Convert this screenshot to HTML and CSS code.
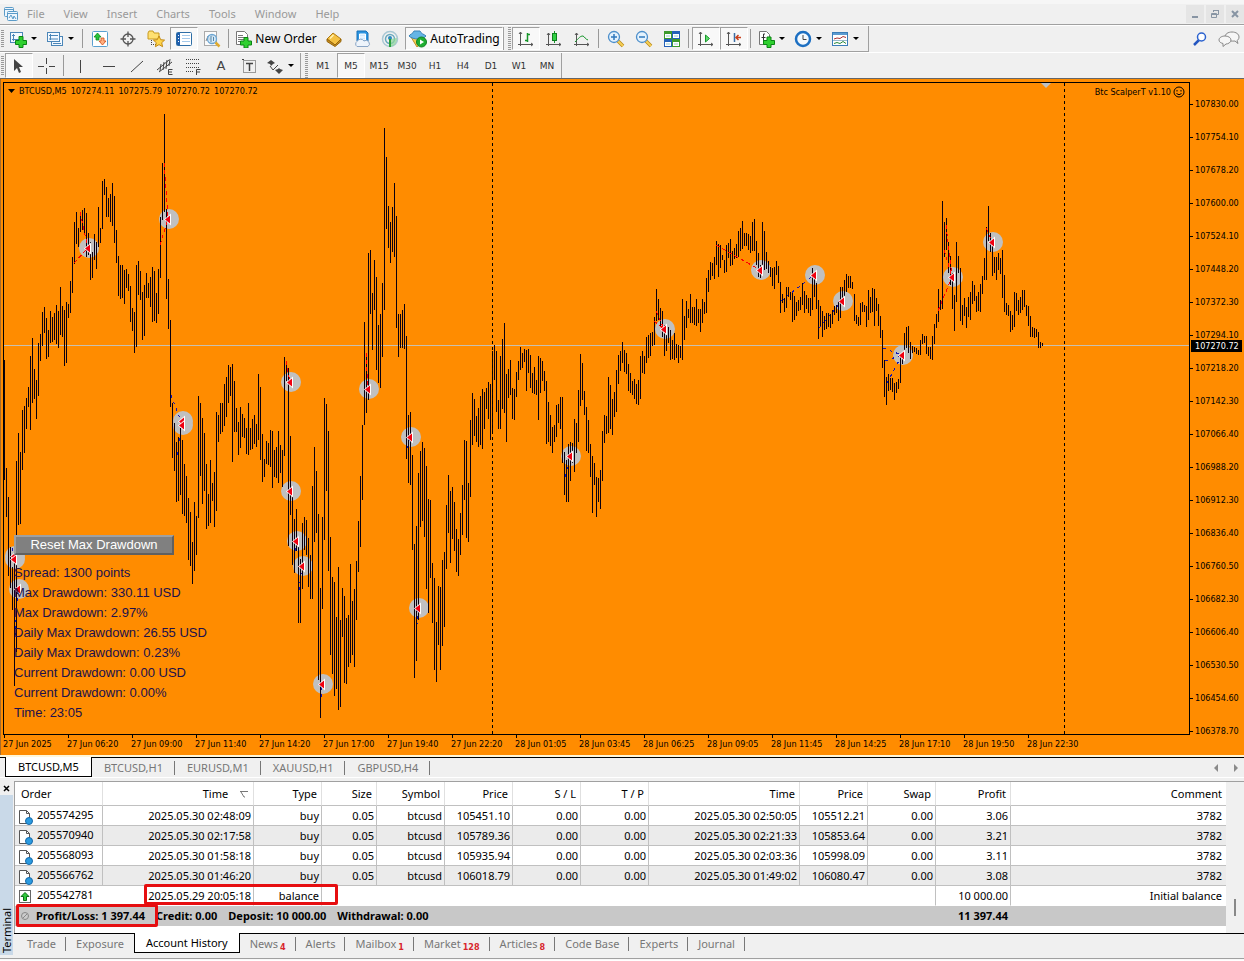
FILE: index.html
```html
<!DOCTYPE html>
<html lang="en">
<head>
<meta charset="utf-8">
<title>BTCUSD,M5</title>
<link rel="stylesheet" href="styles.css">
</head>
<body>
<div class="app">
  <header class="menubar">
    <svg class="app-icon" width="16" height="16" viewBox="0 0 16 16" fill="#eef6fd" stroke="#5b9bc8"><rect x="1.500" y="1.500" width="9" height="9" rx="1"/><path d="M1.500 3.500h9" /><rect x="4.500" y="5.500" width="10" height="9" rx="1"/><path d="M4.500 7.500h10M6 12l2-3 2 4 1-3 2 3" fill="none"/></svg>
    <nav class="menu">
      <button>File</button><button>View</button><button>Insert</button><button>Charts</button><button>Tools</button><button>Window</button><button>Help</button>
    </nav>
    <div class="win-controls">
      <button aria-label="Minimize"><svg width="10" height="10"><path d="M2 8h6" stroke="#8794a3" stroke-width="2"/></svg></button>
      <button aria-label="Restore"><svg width="10" height="10" fill="none" stroke="#8794a3"><path d="M3.500 3V1.500h5v4H7M3 1.500h6"/><path d="M1.500 4.500h5v4h-5zM1 5.500h6"/></svg></button>
      <button aria-label="Close"><svg width="10" height="10"><path d="M2 2l6 6M8 2l-6 6" stroke="#8794a3" stroke-width="2"/></svg></button>
    </div>
  </header>

  <div class="toolbar-row">
    <div class="toolbar">
      <span class="grip"></span>
      <button class="drop" aria-label="New chart"><svg width="18" height="18"><rect x="1.500" y="2.500" width="12" height="10" fill="#f3f9ff" stroke="#4b86b8"/><path d="M4.500 4v7M3 9.500h8M3 5.500h3" stroke="#4b86b8"/><path d="M10 6.500h4v4h3.500v4H14v3h-4v-3H6.500v-4H10z" fill="#2fd02f" stroke="#0a8414"/></svg></button>
      <button class="drop" aria-label="Profiles"><svg width="18" height="18" fill="#f3f9ff" stroke="#4b86b8"><rect x="5.500" y="6.500" width="11" height="9"/><rect x="1.500" y="2.500" width="12" height="9"/><path d="M3 5.500h9M4.500 4v6M3 9h9M7 13.500h8" /></svg></button>
      <span class="sep"></span>
      <button class="tool" aria-label="Market Watch"><svg width="18" height="18"><rect x="1.500" y="1.500" width="15" height="15" rx="1" fill="#fff" stroke="#5aa0d0"/><path d="M6.500 3l3.500 4H8v3H5V7H3z" fill="#27c43b" stroke="#0b8a1d" stroke-width=".8"/><path d="M11.500 15L8 11h2V8h3v3h2z" fill="#ffb080" stroke="#d24b12" stroke-width=".8"/></svg></button>
      <button class="tool" aria-label="Data Window"><svg width="18" height="18" fill="none" stroke="#555" stroke-width="1.300"><circle cx="9" cy="9" r="5"/><path d="M9 1.500v5.500M9 11v5.500M1.500 9H7M11 9h5.500"/></svg></button>
      <button class="tool" aria-label="Navigator"><svg width="18" height="18"><path d="M1 3l1-2h4l1 2h5v6H1z" fill="#ffe071" stroke="#c89a20"/><path d="M4.500 10v6M6 14.500h3" stroke="#444" stroke-dasharray="1 1"/><path d="M12 6l1.700 3.700 3.900.4-2.900 2.600.9 4-3.600-2.100-3.600 2.100.9-4-2.900-2.600 3.900-.4z" fill="#ffd54a" stroke="#c48a12"/></svg></button>
      <button class="tool pressed" aria-label="Terminal"><svg width="18" height="18"><rect x="1.500" y="2.500" width="15" height="13" rx="1" fill="#fff" stroke="#2e6ea6"/><path d="M2 3h3v12H2z" fill="#1f5fae"/><path d="M7 5.500h8M7 8.500h8M7 11.500h8" stroke="#a4c9ea"/><path d="M3 5.500h1M3 8.500h1M3 11.500h1" stroke="#fff"/></svg></button>
      <button class="tool" aria-label="Strategy Tester"><svg width="18" height="18"><rect x="1.500" y="1.500" width="12" height="14" fill="#fbfbfb" stroke="#aaa"/><path d="M3 11l2-5 2 4 2-6 2 5" fill="none" stroke="#888"/><circle cx="9" cy="9" r="4.500" fill="#cfe6f8" fill-opacity=".8" stroke="#6ba5d2" stroke-width="1.300"/><path d="M8 6v6M10.500 7v4" stroke="#5588aa"/><path d="M12.500 12.500l4 4" stroke="#e0aa2c" stroke-width="2.500"/></svg></button>
      <span class="sep"></span>
      <button class="wide order"><svg width="18" height="18"><path d="M1.500 1.500h8l3 3v10h-11z" fill="#fff" stroke="#777"/><path d="M3 5.500h5M3 7.500h7M3 9.500h6M3 11.500h4" stroke="#777"/><path d="M9 7.500h4v3.500h3.500v4H13v3H9v-3H5.500v-4H9z" fill="#2fd02f" stroke="#0a8414"/></svg>New Order</button>
      <button class="tool" aria-label="MetaEditor"><svg width="18" height="18"><path d="M2 9l6-6 8 6-6 6z" fill="#f4c143" stroke="#b07a12"/><path d="M2 9v2.500l8 5 6-5V9l-6 6z" fill="#c98f1d" stroke="#94640c"/><path d="M5 8.500l3.500-3.500" stroke="#fff3b8" stroke-width="1.500"/></svg></button>
      <button class="tool" aria-label="Virtual hosting"><svg width="18" height="18"><path d="M4 1h9l2 2v8H4z" fill="#2d94e0" stroke="#1670b8"/><path d="M6.500 4h6v6h-6zM7 7h5" fill="#cfe8ff" stroke="#fff"/><path d="M4 16.500a3 3 0 010-5 4 4 0 017-.5 3 3 0 014 5.500z" fill="#eef4fb" stroke="#8ba6c6"/></svg></button>
      <button class="tool" aria-label="Signals"><svg width="18" height="18" fill="none"><circle cx="9" cy="9" r="7.500" stroke="#a9c8d4" stroke-width="1.500"/><circle cx="9" cy="9" r="4.500" stroke="#6aa9bd" stroke-width="1.500"/><path d="M9 9v8a8 8 0 007-9" fill="#8fd69a" fill-opacity=".7"/><circle cx="9" cy="8" r="2" fill="#2c8ac0"/><path d="M9 9v8" stroke="#2ba03b" stroke-width="2"/></svg></button>
      <button class="wide auto pressed"><svg width="20" height="20"><path d="M3 8l6 10 8-8z" fill="#f5cf52" stroke="#c2922a"/><path d="M1 7c1-2 4-2 5-5h6c1 3 4 3 6 5-3 4-13 4-17 0z" fill="#65b5e6" stroke="#3a83b8"/><circle cx="13.500" cy="13" r="5" fill="#1fae32" stroke="#128222"/><path d="M12 10.500v5l4-2.500z" fill="#fff"/></svg>AutoTrading</button>
      <span class="grip split"></span>
      <button class="tool pressed" aria-label="Bar chart"><svg width="18" height="18"><path d="M3.500 2v14M1 14.500h15M2 4l1.500-2L5 4M14 13l2 1.500-2 1.500" fill="none" stroke="#555"/><path d="M10.500 3v9M8 10.500h2M11 4.500h2" stroke="#16962a" stroke-width="1.500"/></svg></button>
      <button class="tool" aria-label="Candlesticks"><svg width="18" height="18"><path d="M3.500 3v13M1 14.500h15M2 5l1.500-2L5 5M14 13l2 1.500-2 1.500" fill="none" stroke="#555"/><path d="M9.500 1v12" stroke="#16962a"/><rect x="7.500" y="3.500" width="4" height="7" fill="#2fd043" stroke="#0e7f1e"/></svg></button>
      <button class="tool" aria-label="Line chart"><svg width="18" height="18" fill="none"><path d="M3.500 3v13M1 14.500h15M2 5l1.500-2L5 5M14 13l2 1.500-2 1.500" stroke="#555"/><path d="M2 12c4-4 5-6 8-6 2 1 2 3 5 4" stroke="#16962a"/></svg></button>
      <span class="sep"></span>
      <button class="tool" aria-label="Zoom in"><svg width="18" height="18"><path d="M11 11l5 5" stroke="#b98a1b" stroke-width="3.500"/><path d="M11 11l5 5" stroke="#f6cf55" stroke-width="2"/><circle cx="7" cy="7" r="5.500" fill="#e4f2fd" stroke="#4d8fcb" stroke-width="1.300"/><path d="M4 7h6M7 4v6" stroke="#2f78bd" stroke-width="1.500"/></svg></button>
      <button class="tool" aria-label="Zoom out"><svg width="18" height="18"><path d="M11 11l5 5" stroke="#b98a1b" stroke-width="3.500"/><path d="M11 11l5 5" stroke="#f6cf55" stroke-width="2"/><circle cx="7" cy="7" r="5.500" fill="#e4f2fd" stroke="#4d8fcb" stroke-width="1.300"/><path d="M4 7h6" stroke="#2f78bd" stroke-width="1.500"/></svg></button>
      <button class="tool" aria-label="Tile windows"><svg width="18" height="18"><path d="M1 1h8v8H1zM9 9h8v8H9z" fill="#3d9a2c"/><path d="M9 1h8v8H9zM1 9h8v8H1z" fill="#2461b8"/><path d="M2 4h6v4H2zM10 4h6v4h-6zM2 12h6v4H2zM10 12h6v4h-6z" fill="#fff"/><path d="M3 6h4M11 6h4M3 14h4M11 14h4" stroke="#9cc"/></svg></button>
      <span class="sep"></span>
      <button class="tool pressed" aria-label="Auto scroll"><svg width="18" height="18"><path d="M3.500 2v14M1 14.500h15M2 4l1.500-2L5 4M14 13l2 1.500-2 1.500" fill="none" stroke="#555"/><path d="M8.500 5v7l4-3.500z" fill="#5fdc6c" stroke="#16962a"/></svg></button>
      <button class="tool pressed" aria-label="Chart shift"><svg width="18" height="18"><path d="M3.500 2v14M1 14.500h15M2 4l1.500-2L5 4M14 13l2 1.500-2 1.500" fill="none" stroke="#555"/><path d="M9.500 3v9" stroke="#3a6ea5" stroke-width="1.500"/><path d="M11 7.500h5M13.500 5L11 7.500l2.500 2.500" fill="none" stroke="#c8401c" stroke-width="1.500"/></svg></button>
      <span class="sep"></span>
      <button class="drop" aria-label="Indicators"><svg width="18" height="18"><path d="M2.500 1.500h7l3 3v10h-10z" fill="#fff" stroke="#777"/><path d="M8 4H6.500v9M4.500 7.500h4" fill="none" stroke="#333"/><path d="M10 7h4v3.500h3.500v4H14v3h-4v-3H6.500v-4H10z" fill="#2fd02f" stroke="#0a8414"/></svg></button>
      <button class="drop" aria-label="Periods"><svg width="18" height="18"><circle cx="9" cy="9" r="7" fill="#f4f9fd" stroke="#1c6fc2" stroke-width="2.500"/><path d="M9 5v4.500h3.500" fill="none" stroke="#444"/></svg></button>
      <button class="drop" aria-label="Templates"><svg width="18" height="18"><rect x="1.500" y="2.500" width="15" height="13" fill="#fff" stroke="#3b7db8"/><path d="M2 4h14" stroke="#5b9bd0" stroke-width="2"/><path d="M3 9l3-1 3 .500 3-2 3 1" fill="none" stroke="#a33"/><path d="M2 10.500h14" stroke="#9bc"/><path d="M3 13.500l3-1 3 1 3-2 3 2" fill="none" stroke="#2a8a3a"/></svg></button>
      <span class="tb-end"></span>
    </div>
    <div class="right-tools">
      <button aria-label="Search"><svg width="16" height="16"><path d="M2 14l5-5" stroke="#2456c0" stroke-width="2.500"/><circle cx="9.500" cy="6" r="4" fill="#fff" stroke="#2b62cf" stroke-width="1.500"/></svg></button>
      <button aria-label="Chat"><svg width="22" height="18" fill="#f6f6f6" stroke="#888"><path d="M14 2c4 0 7 2 7 5 0 2-1 3-2 3.500l1 3-3-2.500c-6 .5-10-1-10-4s3-5 7-5z"/><path d="M7 6c3 0 6 1.500 6 4s-3 4-5 4l-3 2.500v-3C3 13 1 12 1 10c0-2.500 3-4 6-4z"/></svg></button>
    </div>
  </div>

  <div class="toolbar-row lower">
    <div class="toolbar second">
      <span class="grip"></span>
      <button class="tool pressed" aria-label="Cursor"><svg width="18" height="18"><path d="M4 2v12l3-3 2 5 2-1-2-5h4z" fill="#444"/></svg></button>
      <button class="tool" aria-label="Crosshair"><svg width="18" height="18" stroke="#444"><path d="M8.500 1v6M8.500 11v6M0 9.500h6M11 9.500h6"/></svg></button>
      <span class="sep"></span>
      <button class="tool" aria-label="Vertical line"><svg width="18" height="18" stroke="#444"><path d="M8.500 3v13"/></svg></button>
      <button class="tool" aria-label="Horizontal line"><svg width="18" height="18" stroke="#444"><path d="M3 9.500h12"/></svg></button>
      <button class="tool" aria-label="Trendline"><svg width="18" height="18" stroke="#444"><path d="M3 15L15 4"/></svg></button>
      <button class="tool" aria-label="Equidistant channel"><svg width="18" height="18" stroke="#444" fill="none"><path d="M1 13L13 3M3 15L16 5M5 7l-1 7M8 5L7 13M11 3l-1 9M14 2l-1 7"/><path d="M16.500 12.500h-4v5h4M12.500 15h3.500"/></svg></button>
      <button class="tool" aria-label="Fibonacci"><svg width="18" height="18" stroke="#444" fill="none"><path d="M2 2.500h14M2 6.500h14M2 10.500h14M2 14.500h8" stroke-dasharray="1 1"/><path d="M16.500 12.500h-4v5.500M12.500 15h3.500"/></svg></button>
      <button class="tool letter">A</button>
      <button class="tool" aria-label="Text label"><svg width="18" height="18" stroke="#444" fill="none"><path d="M3.500 3.500h12v12h-12z" stroke-dasharray="1 1"/><path d="M6 6.500h7M9.500 6v8" stroke-width="1.500"/><path d="M2 2.500h2"/></svg></button>
      <button class="drop" aria-label="Arrows"><svg width="18" height="18"><path d="M1 6l4-3 4 3-2 1-2 2-1-2z" fill="#444"/><path d="M9 13l4 4 4-4-3-1-1-1-1 1z" fill="#444"/><path d="M4 9l3 4 5-5" fill="none" stroke="#444"/></svg></button>
      <span class="grip split"></span>
      <button class="tool tf">M1</button><button class="tool tf pressed">M5</button><button class="tool tf">M15</button><button class="tool tf">M30</button><button class="tool tf">H1</button><button class="tool tf">H4</button><button class="tool tf">D1</button><button class="tool tf">W1</button><button class="tool tf">MN</button>
      <span class="tb-end"></span>
    </div>
  </div>

  <main class="chart">
    <section class="plot">
      <svg class="plot-svg" id="plot"></svg>
      <div class="chart-title"><svg width="7" height="4"><path d="M0 0h7L3.500 4z"/></svg><span>BTCUSD,M5</span><span>107274.11</span><span>107275.79</span><span>107270.72</span><span>107270.72</span></div>
      <div class="expert">Btc ScalperT v1.10<svg width="12" height="12" fill="none" stroke="#000"><circle cx="6" cy="6" r="5"/><path d="M4 4v1.500M8 4v1.500M3.500 7.500q2.500 2.500 5 0"/></svg></div>
      <div class="stats">
        <button class="reset">Reset Max Drawdown</button>
        <p>Spread: 1300 points</p><p>Max Drawdown: 330.11 USD</p><p>Max Drawdown: 2.97%</p><p>Daily Max Drawdown: 26.55 USD</p><p>Daily Max Drawdown: 0.23%</p><p>Current Drawdown: 0.00 USD</p><p>Current Drawdown: 0.00%</p><p>Time: 23:05</p>
      </div>
    </section>
    <aside class="prices">
      <span>107830.00</span><span>107754.10</span><span>107678.20</span><span>107600.00</span><span>107524.10</span><span>107448.20</span><span>107372.30</span><span>107294.10</span><span>107218.20</span><span>107142.30</span><span>107066.40</span><span>106988.20</span><span>106912.30</span><span>106836.40</span><span>106760.50</span><span>106682.30</span><span>106606.40</span><span>106530.50</span><span>106454.60</span><span>106378.70</span>
      <b class="bid">107270.72</b>
    </aside>
    <div class="times">
      <span>27 Jun 2025</span><span>27 Jun 06:20</span><span>27 Jun 09:00</span><span>27 Jun 11:40</span><span>27 Jun 14:20</span><span>27 Jun 17:00</span><span>27 Jun 19:40</span><span>27 Jun 22:20</span><span>28 Jun 01:05</span><span>28 Jun 03:45</span><span>28 Jun 06:25</span><span>28 Jun 09:05</span><span>28 Jun 11:45</span><span>28 Jun 14:25</span><span>28 Jun 17:10</span><span>28 Jun 19:50</span><span>28 Jun 22:30</span>
    </div>
  </main>

  <nav class="tabs chart-tabs">
    <button class="active">BTCUSD,M5</button><button>BTCUSD,H1</button><button>EURUSD,M1</button><button>XAUUSD,H1</button><button>GBPUSD,H4</button>
    <span class="scroll-arrows"><button aria-label="Scroll left"><svg width="4" height="8"><path d="M4 0v8L0 4z" fill="#8a8a8a"/></svg></button><button aria-label="Scroll right"><svg width="4" height="8"><path d="M0 0v8l4-4z" fill="#8a8a8a"/></svg></button></span>
  </nav>

  <section class="terminal">
    <div class="side"><button aria-label="Close terminal"><svg width="7" height="7"><path d="M1 1l5 5M6 1L1 6" stroke="#000" stroke-width="1.500"/></svg></button><span>Terminal</span></div>
    <div class="panel">
      <div class="table-area">
        <table>
          <colgroup><col class="c-order"><col class="c-time"><col class="c-mid"><col class="c-size"><col class="c-mid"><col class="c-mid"><col class="c-mid"><col class="c-mid"><col class="c-time"><col class="c-mid"><col class="c-mid"><col class="c-profit"><col></colgroup>
          <thead><tr><th>Order</th><th>Time <svg class="sort" width="8" height="7" fill="none" stroke="#777"><path d="M0 .500h8M1 1l3 5h1"/></svg></th><th>Type</th><th>Size</th><th>Symbol</th><th>Price</th><th>S / L</th><th>T / P</th><th>Time</th><th>Price</th><th>Swap</th><th>Profit</th><th>Comment</th></tr></thead>
          <tbody id="orders"></tbody>
          <tfoot><tr><td colspan="11"><div class="totals"><svg width="10" height="10" fill="none" stroke="#888"><circle cx="5" cy="5" r="3.500" fill="#ccc"/><path d="M3 7l4-4"/></svg><span>Profit/Loss: 1 397.44</span><span>Credit: 0.00</span><span>Deposit: 10 000.00</span><span>Withdrawal: 0.00</span></div></td><td>11 397.44</td><td></td></tr></tfoot>
        </table>
        <i class="mark mark-balance"></i><i class="mark mark-profit"></i>
        <div class="scrollbar"><i></i></div>
      </div>
      <nav class="tabs term-tabs">
        <button>Trade</button><button class="last">Exposure</button><button class="active">Account History</button><button>News<sub>4</sub></button><button>Alerts</button><button>Mailbox<sub>1</sub></button><button>Market<sub>128</sub></button><button>Articles<sub>8</sub></button><button>Code Base</button><button>Experts</button><button>Journal</button>
      </nav>
    </div>
  </section>
  <footer class="status"></footer>
</div>
<script src="script.js"></script>
</body>
</html>
```

FILE: styles.css
```css
* { box-sizing: border-box; }
body { margin: 0; font: 11px/16px "Noto Sans", "Open Sans", sans-serif; color: #000; background: #f0f0f0; }
button { font: inherit; color: inherit; background: none; border: 0; padding: 0; margin: 0; display: inline-flex; align-items: center; justify-content: center; }
p { margin: 0; }
.app { min-height: 100vh; display: flex; flex-direction: column; overflow: hidden; }

.menubar { display: flex; align-items: center; height: 25px; padding: 4px 0 0 3px; border-bottom: 1px solid #a0a0a0; background: linear-gradient(#f6f6f6 4px, #f0f0f0 4px); }
.menu { display: flex; gap: 19px; padding-left: 8px; flex: 1; color: #999; }
.win-controls { display: flex; gap: 2px; }
.win-controls button { width: 18px; height: 18px; background: #e5e5e5; }

.toolbar-row { display: flex; justify-content: space-between; height: 27px; border-top: 1px solid #fff; }
.toolbar-row.lower { height: 26px; }
.toolbar { display: flex; align-items: stretch; padding: 1px 0; border-bottom: 1px solid #a0a0a0; flex: none; }
.toolbar.second { border-bottom: 0; padding: 0; }
.grip { width: 6px; margin: 3px 0; background: repeating-linear-gradient(#999 0 1px, transparent 1px 2px) 1px 0 / 3px 100% no-repeat; }
.second .grip { width: 5px; }
.grip.split { width: 9px; margin: 0; border-left: 1px solid #a0a0a0; background-position: 4px 0; }
.second .grip.split { width: 9px; }
.sep { width: 1px; margin: 2px 3px 2px 2px; background: #999; }
.tb-end { width: 1px; margin: -1px 0 -1px 3px; background: #a0a0a0; }
.second .tb-end { margin: 0; }
.tool { width: 28px; }
.drop { width: 37px; justify-content: flex-start; padding-left: 3px; gap: 4px; }
.drop::after { content: ""; border: 3px solid transparent; border-top-color: #000; border-bottom: 0; }
.pressed { background: #f8f8f8; border: 1px solid; border-color: #a0a0a0 #fff #fff #a0a0a0; background-clip: padding-box; }
.wide { gap: 2px; font-size: 12px; }
.order { width: 88px; }
.auto { width: 98px; margin-left: 1px; }
.tf { font: 9px/12px "DejaVu Sans", sans-serif; color: #333; }
.letter { font: 13px/16px "DejaVu Sans", sans-serif; color: #444; }
.right-tools { display: flex; align-items: center; gap: 10px; padding-right: 4px; }

.chart { flex: 1; display: grid; grid-template: minmax(653px, 1fr) 20px / minmax(0, 1fr) 54px; background: #ff8c00; border-top: 1px solid #666; border-left: 1px solid #a56a2c; padding: 3px 0 0 2px; font: 9px/12px "DejaVu Sans Condensed", "DejaVu Sans", sans-serif; }
.plot { position: relative; border: 1px solid #000; }
.plot-svg { position: absolute; inset: 0; width: 100%; height: 100%; }
.chart-title { position: absolute; left: 4px; top: 2px; display: flex; align-items: center; gap: 4px; }
.expert { position: absolute; right: 4px; top: 3px; display: flex; align-items: center; gap: 2px; }
.stats { position: absolute; left: 10px; bottom: 11px; font: 13px/20px "Liberation Sans", Arial, sans-serif; color: #20104c; }
.reset { width: 160px; height: 20px; margin-bottom: 8px; background: #808080; color: #fff; border: 2px solid; border-color: #a0a0a0 #606060 #606060 #a0a0a0; }
.prices { grid-row: 1 / 3; grid-column: 2; position: relative; padding-top: 6px; display: flex; flex-direction: column; height: 673px; overflow: hidden; }
.prices span { flex: none; height: 33px; line-height: 33px; display: flex; align-items: center; gap: 2px; }
.prices span::before { content: ""; width: 3px; height: 1px; background: #000; }
.bid { position: absolute; left: 1px; right: 2px; top: 258px; height: 12px; padding-left: 4px; background: #000; color: #fff; font-weight: 400; }
.times { display: flex; overflow: hidden; }
.times span { flex: 0 0 64px; white-space: nowrap; position: relative; padding-top: 3px; }
.times span::before { content: ""; position: absolute; left: 1px; top: 0; width: 1px; height: 3px; background: #000; }

.tabs { display: flex; border-top: 1px solid #000; color: #777; }
.tabs button { position: relative; height: 19px; padding: 0 12px; }
.tabs button::after { content: ""; position: absolute; right: 0; top: 3px; bottom: 2px; width: 1px; background: #777; }
.tabs .active { background: #fff; color: #000; border: 1px solid #000; border-top: 0; margin-top: -1px; height: 20px; }
.tabs .active::after, .tabs .last::after, .scroll-arrows button::after { display: none; }
.chart-tabs { margin-top: 2px; padding-left: 5px; height: 21px; border-bottom: 1px solid #fff; box-shadow: 0 -2px #fff6d8; }
.scroll-arrows { margin-left: auto; display: flex; gap: 16px; padding-right: 6px; }
.tabs .scroll-arrows button { padding: 0; }

.terminal { display: flex; margin-top: 3px; }
.side { width: 14px; flex: none; display: flex; flex-direction: column; }
.side button { height: 14px; width: 12px; }
.side span { flex: 1; writing-mode: vertical-rl; transform: rotate(180deg); width: 13px; line-height: 13px; padding-top: 2px; background: #c9d9e8; }
.panel { flex: 1; min-width: 0; }
.table-area { position: relative; display: flex; height: 152px; background: #fff; border-top: 1px solid #a0a0a0; border-left: 1px solid #a0a0a0; }
table { flex: 1; width: 0; height: 144px; table-layout: fixed; border-collapse: separate; border-spacing: 0; white-space: nowrap; }
.c-order { width: 88px; } .c-time { width: 151px; } .c-mid { width: 68px; } .c-size { width: 55px; } .c-profit { width: 75px; }
th { height: 24px; padding: 0 4px; font-weight: 400; text-align: right; border-right: 1px solid #e0e0e0; border-bottom: 1px solid #c0c0c0; }
th:first-child { text-align: left; padding-left: 6px; }
.sort { margin: 0 1px 0 9px; }
td { height: 20px; padding: 0 2px 0 0; text-align: right; border-right: 1px solid #c0c0c0; border-bottom: 1px solid #c0c0c0; line-height: 18px; }
td:first-child { text-align: left; padding-left: 3px; }
td svg { vertical-align: middle; margin-right: 4px; }
tbody tr:nth-child(even) td { background: #ebebeb; }
tbody tr:last-child td { border-bottom-color: #fff; }
tbody tr:last-child td:first-child { border-right-color: #fff; }
tfoot td, tfoot td:first-child { background: #c8c8c8; border-color: #c8c8c8; font-weight: 700; }
tfoot td:first-child { padding-left: 5px; }
.totals { display: flex; align-items: center; gap: 11px; }
.totals svg { margin-right: -5px; }
td:last-child, th:last-child { border-right: 0; padding-right: 4px; }
.mark { position: absolute; border: 3px solid #e60e10; border-radius: 2px; }
.mark-balance { left: 129px; top: 102px; width: 194px; height: 21px; }
.mark-profit { left: 1px; top: 122px; width: 142px; height: 23px; }
.scrollbar { width: 18px; background: #f0f0f0; display: flex; justify-content: center; align-items: flex-end; padding-bottom: 17px; }
.scrollbar i { width: 2px; height: 17px; background: #888; }
.term-tabs { height: 22px; }
.term-tabs button { padding: 0 10px; }
.term-tabs button:first-child { padding-left: 13px; }
.term-tabs .active { padding: 0 11px; }
sub { font: 700 9px/9px "DejaVu Sans Condensed", sans-serif; color: #d8262c; align-self: flex-end; padding: 0 0 1px 2px; }
.status { height: 6px; border-bottom: 1px solid #fff; background: linear-gradient(#f0f0f0 3px, #a0a0a0 3px 4px, #f8f8f8 4px); }
```

FILE: script.js
```js
const NS = "http://www.w3.org/2000/svg";
const plot = document.getElementById("plot");
// Bars: first x of each run, then high/low pairs at a step of two pixels.
const runs = [
[4, "360-480 468-517 497-576 547-588 567-610 543-686 461-652 433-525 452-524 410-470"],
[24, "406-453 398-429 387-407 356-430 338-403 369-399 380-419 343-396 334-361 312-346"],
[44, "307-333 318-359 330-357 311-343 317-342 313-340 305-344 311-348 287-335 306-337"],
[64, "310-366 302-363 304-318 281-313 257-293 222-264 212-244 228-247 212-232 210-230"],
[84, "208-235 213-257 233-255 242-280 252-278 234-260 242-269 207-247 228-243 181-229"],
[104, "179-195 187-217 198-217 194-222 183-226 196-243 230-263 256-296 265-299 265-298"],
[124, "270-304 269-288 274-291 286-322 308-331 312-353 265-347 261-295 271-300 292-340"],
[144, "285-336 273-298 283-298 277-307 267-322 271-321 293-323 269-314 217-278 163-220"],
[164, "114-212 209-299 279-329 320-407 403-458 423-471 442-502 437-501 428-495 440-514"],
[184, "464-516 476-523 498-560 512-566 542-584 502-571 516-555 396-518 403-476 418-504"],
[204, "433-491 464-529 494-526 460-523 483-501 472-527 412-511 415-442 403-434 403-432"],
[224, "384-426 377-417 365-403 367-396 364-462 381-432 408-432 422-455 407-448 414-437"],
[244, "418-438 428-454 403-455 428-450 419-449 415-444 424-447 374-440 387-460 434-482"],
[264, "459-477 441-464 443-465 430-467 431-488 450-477 447-478 431-483 445-473 450-487"],
[284, "357-456 361-381 368-546 436-515 488-565 519-573 509-551 536-623 559-623 523-589"],
[304, "517-550 520-555 538-587 555-599 486-599 447-542 471-533 514-680 588-718 517-609"],
[324, "398-540 404-491 431-571 537-655 577-674 582-696 617-689 567-710 620-707 588-637"],
[344, "596-683 618-684 615-667 564-663 601-655 589-667 561-620 521-572 476-547 425-500"],
[364, "322-425 353-413 253-400 250-314 293-350 260-310 277-370 325-383 314-388 283-357"],
[384, "128-310 157-229 206-248 222-263 207-252 183-257 216-328 314-357 314-348 310-348"],
[404, "304-349 336-459 415-483 412-485 455-550 544-678 526-661 473-620 451-527 442-521"],
[424, "448-537 466-589 499-613 500-578 563-623 578-670 622-682 586-645 587-670 560-646"],
[444, "552-627 505-569 475-533 491-563 487-539 502-551 529-572 539-576 513-555 485-535"],
[464, "440-500 441-538 483-542 420-497 393-445 399-436 416-442 408-447 396-445 389-449"],
[484, "392-429 388-409 382-419 384-440 351-433 345-380 351-412 400-429 356-429 339-409"],
[504, "323-413 374-442 369-398 360-395 388-419 389-420 372-397 361-380 347-370 353-368"],
[524, "349-362 350-391 349-373 355-388 373-393 367-394 380-395 356-420 358-393 361-381"],
[544, "371-391 381-444 402-442 415-446 427-453 425-442 405-437 404-423 397-429 397-463"],
[564, "452-495 460-502 444-502 442-481 443-463 419-472 423-453 390-442 354-406 363-400"],
[584, "391-415 407-451 420-453 444-477 456-513 463-485 477-517 478-502 470-509 431-481"],
[604, "415-443 416-434 377-433 385-429 399-435 392-417 370-412 355-384 351-371 342-363"],
[624, "350-372 353-374 364-391 373-393 381-395 379-399 384-404 380-405 356-399 351-373"],
[644, "356-374 337-363 335-358 333-356 332-346 317-345 289-321 299-320 308-327 311-337"],
[664, "325-356 331-351 327-343 330-360 340-359 333-360 344-358 345-363 346-358 299-360"],
[684, "316-340 301-328 309-318 294-323 307-323 307-325 299-326 309-323 309-332 299-323"],
[704, "302-314 278-313 270-292 262-280 263-276 257-279 241-265 244-277 245-268 255-260"],
[724, "260-273 245-272 243-258 239-266 251-265 248-259 244-258 231-257 228-251 221-249"],
[744, "233-246 233-246 234-250 236-253 222-251 219-251 241-265 253-277 265-278 222-273"],
[764, "231-270 252-269 261-273 267-277 268-286 267-289 261-275 266-283 282-313 294-303"],
[784, "298-312 287-308 287-297 292-300 293-322 296-320 302-316 300-311 297-310 283-305"],
[804, "291-313 295-309 298-313 298-316 268-310 278-297 283-309 300-339 306-326 311-337"],
[824, "316-330 313-329 313-327 314-328 310-324 306-315 305-313 301-321 287-318 287-305"],
[844, "280-298 274-292 276-288 276-288 282-289 294-321 315-324 317-326 303-325 302-312"],
[864, "305-312 306-327 290-320 297-313 288-312 289-326 298-311 304-326 316-338 330-368"],
[884, "360-397 377-405 374-391 378-390 378-392 383-400 382-393 379-389 357-383 353-364"],
[904, "333-357 327-348 326-353 342-359 346-353 347-352 348-354 350-355 340-355 334-344"],
[924, "336-343 336-354 347-356 347-359 336-360 324-344 314-328 289-322 300-310 201-309"],
[944, "222-257 218-250 242-273 256-285 273-309 295-331 242-302 256-273 268-321 305-325"],
[964, "298-316 307-328 297-317 292-320 281-304 285-301 296-312 292-311 284-312 276-294"],
[984, "258-280 227-280 206-241 233-252 245-276 257-273 257-280 253-270 258-274 250-298"],
[1004, "275-312 303-315 305-316 311-332 315-330 292-327 293-311 300-315 297-313 290-310"],
[1024, "290-307 305-316 306-326 316-337 327-337 328-338 329-337 332-348 342-348 343-346"]
];
const trades = [[15,556],[15,559],[19,589],[89,248],[169,219],[183,421],[183,425],[291,382],[291,491],[297,541],[303,566],[323,684],[369,389],[411,437],[419,608],[571,456],[665,329],[761,270],[815,275],[843,301],[903,355],[953,277],[993,242]];
const losses = "M80 212L88 248M74 263L88 248M164 163L168 219M160 245L168 219M286 361L290 382M366 353L368 389M716 245L760 270M656 311L664 329M654 321L664 329M946 225L952 277M938 311L952 277M944 250L952 277M986 228L992 242";
const gains = "M171 395L182 424M176 462L182 424M12 548L14 558M14 650L18 590M294 565L296 541M299 590L302 566M320 718L322 684M406 455L410 437M416 640L418 608M565 477L570 456M781 301L814 275M819 328L842 301M883 348L902 355M885 361L902 355M887 383L902 355";

function add(parent, name, attrs) {
  const el = document.createElementNS(NS, name);
  for (const key in attrs) el.setAttribute(key, attrs[key]);
  parent.appendChild(el);
  return el;
}
add(plot, "rect", { x: 0, y: 262, width: "100%", height: 1, fill: "#c8c0b0" });
const g = add(plot, "g", { transform: "translate(-4 -83)" });
trades.forEach(([x, y]) => add(g, "circle", { cx: x, cy: y, r: 10, fill: "#c0c0c0" }));
let bars = "";
runs.forEach(([start, list]) => list.split(" ").forEach((pair, i) => {
  const [top, bottom] = pair.split("-");
  bars += `M${start + i * 2 + 0.5} ${top}V${bottom}`;
}));
add(g, "path", { d: gains, stroke: "#1414b4", "stroke-dasharray": "3 4", "shape-rendering": "crispEdges" });
add(g, "path", { d: bars, stroke: "#0a0010", "shape-rendering": "crispEdges" });
add(g, "path", { d: losses, stroke: "#f00", "stroke-dasharray": "4 3", "shape-rendering": "crispEdges" });
add(g, "path", { d: "M492.5 83V2000M1064.5 83V2000", stroke: "#000", "stroke-dasharray": "3 3" });
trades.forEach(([x, y]) => {
  add(g, "path", { d: `M${x - 5} ${y + 0.5}l7-6v12z`, fill: "#fff" });
  add(g, "path", { d: `M${x - 4} ${y + 0.5}l5-4v8z`, fill: "#f00010" });
});
add(g, "path", { d: "M1041 83h10l-5 5z", fill: "#c0c0c0" });

const rows = [
["205574295","2025.05.30 02:48:09","105451.10","2025.05.30 02:50:05","105512.21","3.06"],
["205570940","2025.05.30 02:17:58","105789.36","2025.05.30 02:21:33","105853.64","3.21"],
["205568093","2025.05.30 01:58:18","105935.94","2025.05.30 02:03:36","105998.09","3.11"],
["205566762","2025.05.30 01:46:20","106018.79","2025.05.30 01:49:02","106080.47","3.08"]
];
const page = '<svg width="15" height="16"><path d="M1.5 1.5h7l3 3v10h-10z" fill="#fff" stroke="#555"/><path d="M8.500 1.500v3h3" fill="none" stroke="#555"/><circle cx="11" cy="12" r="3.500" fill="#2b9be0" stroke="#1768a8"/></svg>';
const deposit = '<svg width="15" height="16"><rect x="1.500" y="1.500" width="11" height="12" fill="#fff" stroke="#666"/><path d="M7 3.500l4 4H8.500v4h-3v-4H3z" fill="#2fc83c" stroke="#0b6e16"/></svg>';
document.getElementById("orders").innerHTML = rows.map(r =>
  `<tr><td>${page}${r[0]}</td><td>${r[1]}</td><td>buy</td><td>0.05</td><td>btcusd</td><td>${r[2]}</td><td>0.00</td><td>0.00</td><td>${r[3]}</td><td>${r[4]}</td><td>0.00</td><td>${r[5]}</td><td>3782</td></tr>`
).join("") + `<tr><td>${deposit}205542781</td><td>2025.05.29 20:05:18</td><td>balance</td><td colspan="8"></td><td>10 000.00</td><td>Initial balance</td></tr>`;
```
